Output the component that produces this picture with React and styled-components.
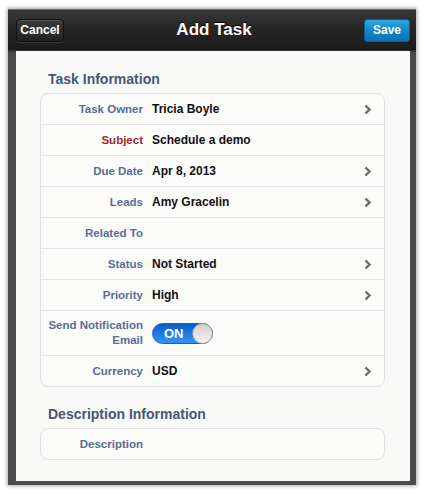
import React from "react";
import styled, { createGlobalStyle } from "styled-components";

const Global = createGlobalStyle`
  html, body { margin: 0; padding: 0; background: #ffffff; }
  body { font-family: "Liberation Sans", Arial, sans-serif; }
`;

const rows = [
  { label: "Task Owner", value: "Tricia Boyle", arrow: true },
  { label: "Subject", value: "Schedule a demo", required: true },
  { label: "Due Date", value: "Apr 8, 2013", arrow: true },
  { label: "Leads", value: "Amy Gracelin", arrow: true },
  { label: "Related To", value: "" },
  { label: "Status", value: "Not Started", arrow: true },
  { label: "Priority", value: "High", arrow: true },
  { label: "Send Notification Email", toggle: true, tall: true },
  { label: "Currency", value: "USD", arrow: true },
];

const Chevron = () => (
  <svg width="8" height="11" viewBox="0 0 8 11">
    <path d="M1.5 1.5 L5.5 5.5 L1.5 9.5" fill="none" stroke="#6b6b6b" strokeWidth="2.4" />
  </svg>
);

const App = () => {
  return (
    <Page>
      <Global />
      <Frame>
        <Header>
          <Cancel>Cancel</Cancel>
          <Title>Add Task</Title>
          <Save>Save</Save>
        </Header>
        <Body>
          <Panel>
            <SectionTitle>Task Information</SectionTitle>
            <Card>
              {rows.map((r) => (
                <Row key={r.label} tall={r.tall}>
                  <Label required={r.required}>
                    {r.tall ? (
                      <>
                        Send Notification
                        <br />
                        Email
                      </>
                    ) : (
                      r.label
                    )}
                  </Label>
                  <Value>
                    {r.toggle ? (
                      <Toggle>
                        <span>ON</span>
                        <Knob />
                      </Toggle>
                    ) : (
                      r.value
                    )}
                  </Value>
                  <Arrow>{r.arrow && <Chevron />}</Arrow>
                </Row>
              ))}
            </Card>
            <SectionTitle second>Description Information</SectionTitle>
            <Card>
              <Row>
                <Label>Description</Label>
                <Value />
                <Arrow />
              </Row>
            </Card>
          </Panel>
        </Body>
      </Frame>
    </Page>
  );
};

export default App;

const Page = styled.div`
  width: 425px;
  height: 494px;
  box-sizing: border-box;
  padding: 9px 9px 9px 8px;
`;

const Frame = styled.div`
  width: 408px;
  height: 476px;
  display: flex;
  flex-direction: column;
  background: linear-gradient(90deg, #5a5a5a, #4b4b4b 3%, #4b4b4b 97%, #5a5a5a);
  box-shadow: 0 0 4px 1px rgba(0, 0, 0, 0.35);
`;

const Header = styled.div`
  height: 41px;
  flex: none;
  display: flex;
  align-items: center;
  justify-content: space-between;
  padding: 0 6px 0 8px;
  background: linear-gradient(#3a3a3a, #262626 45%, #1c1c1c);
  border-top: 1px solid #6a6a6a;
  box-sizing: border-box;
`;

const Cancel = styled.div`
  width: 48px;
  height: 23px;
  box-sizing: border-box;
  display: flex;
  align-items: center;
  justify-content: center;
  border-radius: 4px;
  border: 1px solid #0e0e0e;
  background: linear-gradient(#3a3a3a, #222222);
  box-shadow: inset 0 1px 0 rgba(255, 255, 255, 0.15), 0 1px 0 rgba(255, 255, 255, 0.1);
  color: #ffffff;
  font-size: 12px;
  font-weight: bold;
`;

const Title = styled.div`
  color: #ffffff;
  font-size: 17px;
  font-weight: bold;
  text-shadow: 0 -1px 0 #000;
`;

const Save = styled.div`
  width: 46px;
  height: 23px;
  box-sizing: border-box;
  display: flex;
  align-items: center;
  justify-content: center;
  border-radius: 3px;
  border: 1px solid #0a5d93;
  background: linear-gradient(#2ea8e2, #1286c9 50%, #0c74b6);
  color: #ffffff;
  font-size: 12px;
  font-weight: bold;
`;

const Body = styled.div`
  flex: 1;
  display: flex;
  padding: 1px 6px 4px 8px;
  background: linear-gradient(#2a2a2a, #4b4b4b 3px);
`;

const Panel = styled.div`
  flex: 1;
  background: #f9f9f8;
  padding: 0 25px 0 24px;
  display: flex;
  flex-direction: column;
`;

const SectionTitle = styled.div`
  color: #4a5670;
  font-size: 14px;
  font-weight: bold;
  padding: ${(p) => (p.second ? "19px 0 6px 8px" : "20px 0 6px 8px")};
`;

const Card = styled.div`
  background: #fbfbfa;
  border: 1px solid #e0e0e0;
  border-radius: 8px;
`;

const Row = styled.div`
  height: ${(p) => (p.tall ? "44px" : "30px")};
  display: grid;
  grid-template-columns: 102px 1fr 20px;
  align-items: center;
  column-gap: 9px;
  border-top: 1px solid #e2e2e2;
  &:first-child {
    border-top: none;
  }
`;

const Label = styled.div`
  text-align: right;
  font-size: 11.5px;
  font-weight: bold;
  line-height: 15px;
  color: ${(p) => (p.required ? "#a3262a" : "#5b6c94")};
`;

const Value = styled.div`
  font-size: 12px;
  font-weight: bold;
  color: #111111;
`;

const Arrow = styled.div`
  display: flex;
  align-items: center;
`;

const Toggle = styled.div`
  width: 61px;
  height: 21px;
  box-sizing: border-box;
  border-radius: 11px;
  background: linear-gradient(#0a5bc4, #1d7ee8 55%, #3791f0);
  border: 1px solid #1a5fae;
  display: flex;
  align-items: center;
  justify-content: space-between;
  color: #ffffff;
  font-size: 13px;
  font-weight: bold;
  span {
    padding-left: 11px;
  }
`;

const Knob = styled.div`
  width: 21px;
  height: 21px;
  margin-right: -1px;
  box-sizing: border-box;
  border-radius: 50%;
  border: 1px solid #9a9a9a;
  background: linear-gradient(#cfcfcf, #f4f4f4);
`;
